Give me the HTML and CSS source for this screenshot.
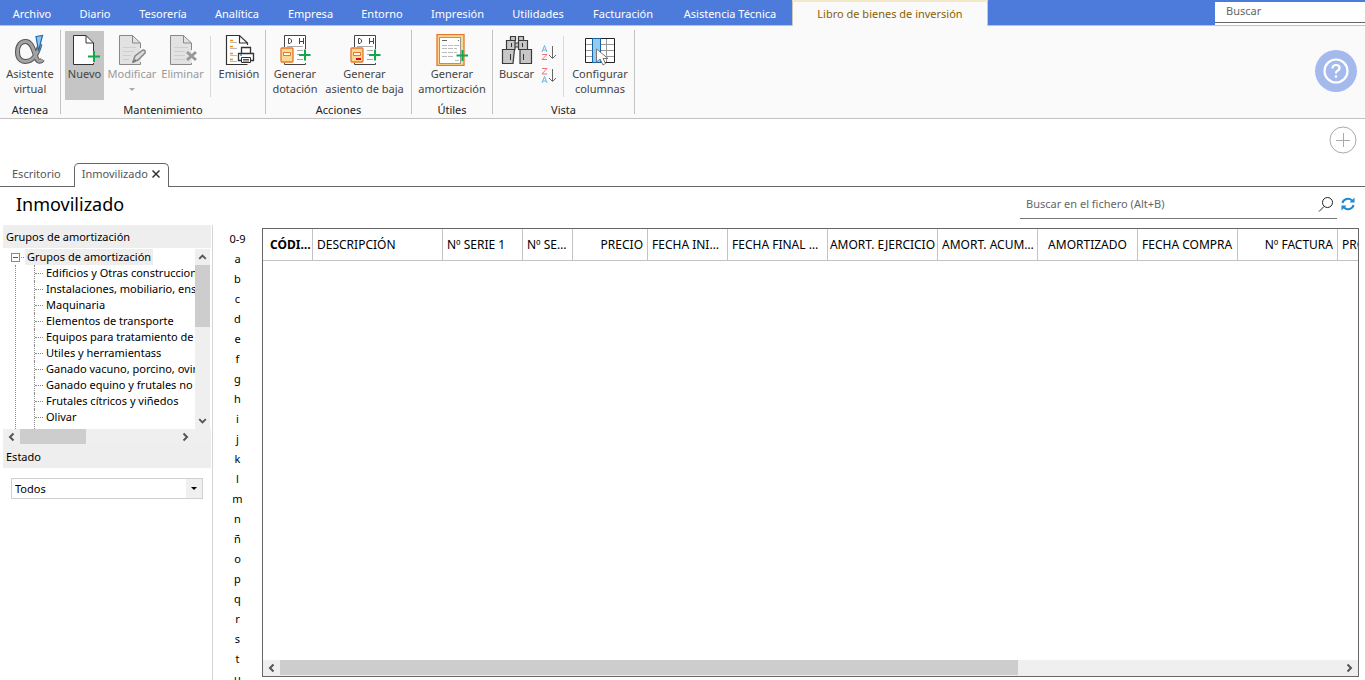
FILE: index.html
```html
<!DOCTYPE html>
<html lang="es">
<head>
<meta charset="utf-8">
<title>Inmovilizado</title>
<link rel="stylesheet" href="styles.css">
</head>
<body>
<div class="app">
  <header class="menubar">
    <nav class="menu">
      <a class="menu-item" href="#">Archivo</a>
      <a class="menu-item" href="#">Diario</a>
      <a class="menu-item" href="#">Tesorería</a>
      <a class="menu-item" href="#">Analítica</a>
      <a class="menu-item" href="#">Empresa</a>
      <a class="menu-item" href="#">Entorno</a>
      <a class="menu-item" href="#">Impresión</a>
      <a class="menu-item" href="#">Utilidades</a>
      <a class="menu-item" href="#">Facturación</a>
      <a class="menu-item" href="#">Asistencia Técnica</a>
      <a class="menu-item menu-active" href="#">Libro de bienes de inversión</a>
    </nav>
    <div class="menu-search"><input type="text" placeholder="Buscar" aria-label="Buscar"></div>
  </header>

  <section class="ribbon">
    <div class="group">
      <div class="tools">
        <button class="tool w-52" type="button">
          <svg class="icon" viewBox="0 0 32 32"><path d="M26 10C24 18 20 27.500 11.500 27.500C6.500 27.500 3.500 24 3.500 18C3.500 11.500 6.500 7.500 11.500 7.500C19 7.500 20 19 22.500 24.500C24 28 27 28 28.500 25.500" fill="none" stroke="#555" stroke-width="5"/><path d="M26 10C24 18 20 27.500 11.500 27.500C6.500 27.500 3.500 24 3.500 18C3.500 11.500 6.500 7.500 11.500 7.500C19 7.500 20 19 22.500 24.500C24 28 27 28 28.500 25.500" fill="none" stroke="#a3a3a3" stroke-width="3"/><path d="M22 2.500L28.500 1.500L24.500 17Z" fill="#8ec5f0" stroke="#1c69ae" stroke-width="1.200"/></svg>
          <span>Asistente<br>virtual</span></button>
      </div>
      <div class="group-name">Atenea</div>
    </div>

    <div class="group">
      <div class="tools">
        <button class="tool tool-selected w-39" type="button">
          <svg class="icon" viewBox="0 0 32 32"><path d="M4.500 1.500H17L24.500 9V30.500H4.500Z" fill="#fff"/><path d="M24.500 17V9L17 1.500H4.500V30.500H24.500V29M17 1.500V9H24.500" fill="none" stroke="#333"/><path d="M25 17V28M19 22.500H31" stroke="#12a84c" stroke-width="2" fill="none"/></svg>
          <span>Nuevo</span></button>
        <button class="tool w-52" type="button" disabled>
          <svg class="icon" viewBox="0 0 32 32"><path d="M3.500 1.500H16L24.500 9V30.500H3.500Z" fill="#e2e2e2"/><path d="M24.500 14V9L16.500 1.500H3.500V30.500H24.500V28M16.500 1.500V9H24.500" fill="none" stroke="#888"/><path d="M7 13.500H20M7 17.500H18M7 21.500H15M7 25.500H13" stroke="#cecece"/><path d="M17 28L19 22L27 16Q30 16 29 19L22 26Z" fill="#ddd" stroke="#888" stroke-width="1.500"/><path d="M17 28L20 26" stroke="#777" stroke-width="2"/></svg>
          <span>Modificar<i class="caret"></i></span></button>
        <button class="tool w-45" type="button" disabled>
          <svg class="icon" viewBox="0 0 32 32"><path d="M3.500 1.500H16L24.500 9V30.500H3.500Z" fill="#e2e2e2"/><path d="M24.500 16V9L16.500 1.500H3.500V30.500H24.500V29M16.500 1.500V9H24.500" fill="none" stroke="#888"/><path d="M7 13.500H21M7 17.500H18M7 21.500H18M7 25.500H18" stroke="#cecece"/><path d="M20 18L29 26M29 18L20 26" stroke="#999" stroke-width="3"/></svg>
          <span>Eliminar</span></button>
        <i class="divider"></i>
        <button class="tool w-44" type="button">
          <svg class="icon" viewBox="0 0 32 32"><path d="M3.500 1.500H16L24.500 9V30.500H3.500Z" fill="#fff"/><path d="M24.500 11V9L16.500 1.500H3.500V30.500H24.500M16.500 1.500V9H24.500" fill="none" stroke="#333" stroke-width="1.200"/><path d="M7 6.500H10M7 12.500H10M7 19.500H10M7 25.500H10" stroke="#e99517" stroke-width="1.500"/><path d="M7 8.500H14M7 14.500H14M7 21.500H14M7 27.500H14" stroke="#bbb"/><path d="M18.500 19V13.500H27.500V19M15.500 19.500H30.500V26.500H15.500Z" fill="#fff" stroke="#333" stroke-width="1.300"/><path d="M18.500 23.500H27.500V28.500H18.500Z" fill="#fff" stroke="#333"/><path d="M20 25.500H26M20 27H26" stroke="#555"/><path d="M17 21H19" stroke="#2390d9" stroke-width="1.500"/></svg>
          <span>Emisión</span></button>
      </div>
      <div class="group-name">Mantenimiento</div>
    </div>

    <div class="group">
      <div class="tools">
        <button class="tool w-50" type="button">
          <svg class="icon" viewBox="0 0 32 32"><path d="M5.500 1.500H26.500V30.500H5.500Z" fill="#fff"/><path d="M5.500 13V1.500H26.500V15M5.500 29V30.500H26.500V29" fill="none" stroke="#444"/><path d="M9.500 9.500V4.500H11L12.500 6V8L11 9.500ZM20.500 4V10M24.500 4V10M20.500 7.500H24.500" fill="none" stroke="#444"/><path d="M8 12.500H24M18 16.500H24M18 20.500H21M18 25.500H24" stroke="#aaa"/><rect x="2" y="14" width="12" height="14" rx="1" fill="#f8d98d" stroke="#e6752d" stroke-width="1.300"/><path d="M4.500 18.500H11.500V21.500H4.500Z" fill="#fff" stroke="#e6752d"/><path d="M26 15.500V26.500M20 21H31.500" stroke="#12a84c" stroke-width="2"/></svg>
          <span>Generar<br>dotación</span></button>
        <button class="tool w-85" type="button">
          <svg class="icon" viewBox="0 0 32 32"><path d="M5.500 1.500H26.500V30.500H5.500Z" fill="#fff"/><path d="M5.500 13V1.500H26.500V15M5.500 29V30.500H26.500V29" fill="none" stroke="#444"/><path d="M9.500 9.500V4.500H11L12.500 6V8L11 9.500ZM20.500 4V10M24.500 4V10M20.500 7.500H24.500" fill="none" stroke="#444"/><path d="M8 12.500H24M18 16.500H24M18 20.500H21M18 25.500H24" stroke="#aaa"/><rect x="2" y="14" width="12" height="14" rx="1" fill="#f8d98d" stroke="#e6752d" stroke-width="1.300"/><path d="M4.500 18.500H11.500V21.500H4.500Z" fill="#fff" stroke="#e6752d"/><path d="M7 25H12" stroke="#e3001b" stroke-width="2"/><path d="M26 15.500V26.500M20 21H31.500" stroke="#12a84c" stroke-width="2"/></svg>
          <span>Generar<br>asiento de baja</span></button>
      </div>
      <div class="group-name">Acciones</div>
    </div>

    <div class="group">
      <div class="tools">
        <button class="tool w-72" type="button">
          <svg class="icon" viewBox="0 0 32 32"><rect x="1" y=".500" width="27" height="31" fill="#f8d98d" stroke="#e6752d" stroke-width="1.300"/><rect x="3.500" y="3.500" width="21" height="26" fill="#fff" stroke="#999"/><path d="M6 6.500H11M22 6.500H23" stroke="#666"/><path d="M6 11.500H23M6 14.500H21M6 18.500H21M6 22.500H18M19 26.500H23" stroke="#bbb" stroke-dasharray="5 1"/><path d="M26.500 16V27M20.500 21.500H32" stroke="#12a84c" stroke-width="2"/></svg>
          <span>Generar<br>amortización</span></button>
      </div>
      <div class="group-name">Útiles</div>
    </div>

    <div class="group">
      <div class="tools">
        <button class="tool w-39" type="button">
          <svg class="icon" viewBox="0 0 32 32"><path d="M9.500 2.500H14.500V6.500H9.500ZM17.500 2.500H22.500V6.500H17.500ZM5.500 6.500H14V15.500H5.500ZM17.500 6.500H26.500V15.500H17.500ZM14 9H17.500V13H14ZM1.500 15.500H13.500L12 29.500H1.500ZM19 15.500H30.500V29.500H19Z" fill="#c7c7c7" stroke="#3b3b3b" stroke-width="1.200"/><path d="M10.500 9V13M21.500 9V13M9.500 20V26M22.500 20V26" stroke="#333"/></svg>
          <span>Buscar</span></button>
        <div class="sorts">
          <button class="sort" type="button" aria-label="Orden ascendente"><svg viewBox="0 0 16 16"><path d="M1 7L3.500 .500L6 7M2 5H5" fill="none" stroke="#66b5e6"/><path d="M1 9.500H6L1 14.500H6" fill="none" stroke="#f07373"/><path d="M11.500 1V13M8 10L11.500 13.500L15 10" fill="none" stroke="#666"/></svg></button>
          <button class="sort" type="button" aria-label="Orden descendente"><svg viewBox="0 0 16 16"><path d="M1 .500H6L1 6H6" fill="none" stroke="#f07373"/><path d="M1 15L3.500 8.500L6 15M2 13H5" fill="none" stroke="#66b5e6"/><path d="M11.500 1V13M8 10L11.500 13.500L15 10" fill="none" stroke="#666"/></svg></button>
        </div>
        <i class="divider"></i>
        <button class="tool w-60" type="button">
          <svg class="icon" viewBox="0 0 32 32"><path d="M1.500 4.500H30.500V28.500H1.500Z" fill="#fff" stroke="#222"/><path d="M2 10.500H30M2 16.500H30M2 22.500H30M22.500 5V28" stroke="#999"/><path d="M8.500 4.500H16.500V28.500H8.500Z" fill="#94caf0" stroke="#1266a8"/><path d="M12.500 15V28L16 25L19 31L21.500 29.500L19 24.500H24Z" fill="#fff" stroke="#777"/></svg>
          <span>Configurar<br>columnas</span></button>
      </div>
      <div class="group-name">Vista</div>
    </div>
    <button class="help" type="button" aria-label="Ayuda"><svg viewBox="0 0 42 42"><circle cx="21" cy="21" r="21" fill="#a5baec"/><circle cx="21" cy="21" r="11.500" fill="none" stroke="#fff" stroke-width="2.200"/><path d="M17.500 18.500Q17.500 15 21 15Q24.500 15 24.500 18Q24.500 20 22 21Q21 21.500 21 23.500" fill="none" stroke="#fff" stroke-width="2.200"/><circle cx="21" cy="26.500" r="1.300" fill="#fff"/></svg></button>
  </section>

  <div class="strip">
    <nav class="tabs">
      <a class="tab" href="#">Escritorio</a>
      <div class="tab tab-active"><a href="#">Inmovilizado</a><button class="close" type="button" aria-label="Cerrar"><svg viewBox="0 0 8 8"><path d="M.500 .500L7.500 7.500M7.500 .500L.500 7.500" stroke="#333" stroke-width="1.500"/></svg></button></div>
    </nav>
    <button class="add" type="button" aria-label="Añadir"><svg viewBox="0 0 28 28"><circle cx="14" cy="14" r="13" fill="#fff" stroke="#aaa"/><path d="M14.500 7V21M7 14.500H21" stroke="#aaa"/></svg></button>
  </div>

  <div class="title-row">
    <h1>Inmovilizado</h1>
    <div class="file-search">
      <input type="text" placeholder="Buscar en el fichero (Alt+B)" aria-label="Buscar en el fichero">
      <svg viewBox="0 0 16 16"><circle cx="9.500" cy="6.500" r="5" fill="none" stroke="#222"/><path d="M6 10.500L1 15.500" stroke="#222"/></svg>
    </div>
    <button class="refresh" type="button" aria-label="Actualizar"><svg viewBox="0 0 14 14"><path d="M1.500 6A5.500 5 0 0 1 11 3.500M12.500 8A5.500 5 0 0 1 3 10.500" fill="none" stroke="#1f8ad0" stroke-width="2"/><path d="M13.500 .500V5.500H8.500ZM.500 13.500V8.500H5.500Z" fill="#1f8ad0"/></svg></button>
  </div>

  <main class="content">
    <aside class="side">
      <h2>Grupos de amortización</h2>
      <div class="tree-box">
        <div class="tree">
          <div class="root"><button class="toggle" type="button" aria-label="Contraer"></button><span>Grupos de amortización</span></div>
          <ul>
            <li>Edificios y Otras construcciones</li>
            <li>Instalaciones, mobiliario, enseres</li>
            <li>Maquinaria</li>
            <li>Elementos de transporte</li>
            <li>Equipos para tratamiento de información</li>
            <li>Utiles y herramientass</li>
            <li>Ganado vacuno, porcino, ovino</li>
            <li>Ganado equino y frutales no cítricos</li>
            <li>Frutales cítricos y viñedos</li>
            <li>Olivar</li>
          </ul>
        </div>
        <div class="vbar"><svg viewBox="0 0 16 16"><path d="M4.500 10L8 6.500L11.500 10" /></svg><i></i><svg viewBox="0 0 16 16"><path d="M4.500 6L8 9.500L11.500 6"/></svg></div>
      </div>
      <div class="hbar hbar-tree"><svg viewBox="0 0 16 16"><path d="M10 4.500L6.500 8L10 11.500"/></svg><i></i><svg viewBox="0 0 16 16"><path d="M6 4.500L9.500 8L6 11.500"/></svg></div>
      <h2><label for="estado">Estado</label></h2>
      <div class="select-box">
        <select id="estado"><option>Todos</option></select>
        <svg viewBox="0 0 6 3"><path d="M0 0H6L3 3Z"/></svg>
      </div>
    </aside>

    <nav class="letters">
      <a href="#">0-9</a><a href="#">a</a><a href="#">b</a><a href="#">c</a><a href="#">d</a><a href="#">e</a><a href="#">f</a><a href="#">g</a><a href="#">h</a><a href="#">i</a><a href="#">j</a><a href="#">k</a><a href="#">l</a><a href="#">m</a><a href="#">n</a><a href="#">ñ</a><a href="#">o</a><a href="#">p</a><a href="#">q</a><a href="#">r</a><a href="#">s</a><a href="#">t</a><a href="#">u</a>
    </nav>

    <div class="grid">
      <div class="grid-view">
        <table>
          <colgroup><col class="w50"><col class="w130"><col class="w80"><col class="w50"><col class="w75"><col class="w80"><col class="w100"><col class="w110"><col class="w100"><col class="w100"><col class="w100"><col class="w100"><col class="w100"></colgroup>
          <thead><tr>
            <th class="key">CÓDIGO</th><th>DESCRIPCIÓN</th><th>Nº SERIE 1</th><th>Nº SERIE 2</th><th class="right">PRECIO</th><th>FECHA INICIO</th><th>FECHA FINAL AMORT.</th><th class="fit">AMORT. EJERCICIO</th><th class="tight">AMORT. ACUMULADA</th><th class="center">AMORTIZADO</th><th>FECHA COMPRA</th><th class="right">Nº FACTURA</th><th>PROVEEDOR</th>
          </tr></thead>
        </table>
      </div>
      <div class="hbar hbar-grid"><svg viewBox="0 0 16 16"><path d="M10 4.500L6.500 8L10 11.500"/></svg><i></i><b></b><svg viewBox="0 0 16 16"><path d="M6 4.500L9.500 8L6 11.500"/></svg></div>
    </div>
  </main>
</div>
</body>
</html>
```

FILE: styles.css
```css
* { box-sizing: border-box; }
html, body { height: 100%; }
body { margin: 0; background: #fff; color: #000; font: 11px/16px "Noto Sans", "Open Sans", sans-serif; overflow: hidden; }
a { color: inherit; text-decoration: none; }
button { border: 0; padding: 0; background: none; font: inherit; color: inherit; }
input, select { font: inherit; color: inherit; border: 0; outline: 0; padding: 0; background: #fff; }
input::placeholder { color: #666; opacity: 1; }
svg { display: block; flex: none; }
.app { height: 100vh; display: flex; flex-direction: column; }

.menubar { display: flex; justify-content: space-between; background: #4d7bdc; border-bottom: 1px solid #c3c3c3; flex: none; height: 26px; }
.menu { display: grid; grid-template-columns: 64px 62px 74px 74px 73px 70px 81px 80px 90px 124px 196px; }
.menu-item { line-height: 27px; color: #fff; white-space: nowrap; text-align: center; }
.menu-active { height: 26px; background: #fafafa; color: #8a6100; border: 1px solid #c9c9bd; border-top: 2px solid #f3e9c8; border-bottom: 0; line-height: 24px; }
.menu-search { width: 150px; margin-top: 2px; background: #fff; height: 23px; }
.menu-search input { display: block; width: 100%; height: 21px; padding: 0 11px 3px; border-bottom: 1px solid #666; }

.ribbon { display: flex; height: 93px; background: #fafafa; border-bottom: 1px solid #c3c3c3; flex: none; }
.group { display: flex; flex-direction: column; padding: 1px 4px 0; border-right: 1px solid #c3c3c3; margin: 4px 0; }
.tools { display: flex; flex: 1; gap: 2px; }
.tool { display: flex; flex-direction: column; align-items: center; padding: 3px 0 0; height: 69px; color: #444; line-height: 15px; white-space: nowrap; }
.tool span { text-align: center; }
.tool:disabled { color: #999; }
.tool-selected { background: #c5c5c5; }
.w-39 { width: 39px; } .w-44 { width: 44px; } .w-45 { width: 45px; } .w-50 { width: 50px; } .w-52 { width: 52px; } .w-60 { width: 60px; } .w-72 { width: 72px; } .w-85 { width: 85px; }
.icon { width: 32px; height: 32px; }
.caret { display: block; width: 0; margin: 7px auto 0; border: 3px solid transparent; border-top-color: #aaa; border-bottom: 0; }
.divider { width: 1px; margin: 5px 4px 5px 3px; background: #d9d9d9; }
.sorts { display: flex; flex-direction: column; gap: 7px; padding: 14px 1px 0 3px; }
.sort svg { width: 16px; height: 16px; }
.group-name { text-align: center; line-height: 16px; height: 12px; color: #222; }
.help { margin: 24px 8px 0 auto; width: 42px; height: 42px; }

.strip { display: flex; justify-content: space-between; border-bottom: 1px solid #666; height: 68px; flex: none; }
.tabs { display: flex; align-items: flex-end; padding-left: 4px; }
.tab { padding: 0 8px; height: 24px; line-height: 23px; color: #555; }
.tab-active { display: flex; align-items: center; gap: 4px; margin-left: 5px; padding: 0 8px 4px 7px; border: 1px solid #666; border-bottom: 0; border-radius: 5px 5px 0 0; background: #fff; margin-bottom: -1px; }
.close svg { width: 8px; height: 8px; }
.add { width: 28px; height: 28px; margin: 7px 8px 0 0; }

.title-row { display: flex; align-items: center; height: 38px; padding: 0 10px 4px 16px; flex: none; }
h1 { margin: 0 auto 0 0; font-size: 18px; line-height: 24px; font-weight: 400; }
.file-search { display: flex; align-items: center; width: 317px; height: 29px; border-bottom: 1px solid #777; padding: 0 3px 0 6px; margin-right: 4px; }
.file-search input { flex: 1; min-width: 0; }
.file-search svg { width: 16px; height: 16px; }
.refresh svg { width: 14px; height: 14px; }

.content { display: flex; flex: 1; min-height: 0; padding: 0 6px 0 3px; }
.side { width: 210px; flex: none; border-right: 1px solid #d5d5d5; padding-right: 1px; }
h2 { margin: 0; padding: 0 3px; background: #eee; font-size: 11px; font-weight: 400; line-height: 23px; }
.tree-box { display: flex; height: 181px; padding-right: 1px; border-top: 1px solid #fff; }
.tree { flex: 1; min-width: 0; overflow: hidden; padding-left: 8px; }
.root { display: flex; align-items: center; height: 16px; }
.root::before { content: ""; order: 1; width: 3px; margin: 0 1px; border-top: 1px dotted #888; }
.root span { order: 2; background: #eee; padding: 0 2px; }
.toggle { width: 9px; height: 9px; border: 1px solid #888; }
.toggle::before { content: ""; display: block; width: 5px; height: 1px; margin: 0 auto; background: #3a5fa8; }
.tree ul { list-style: none; margin: 0 0 0 4px; padding: 0 0 12px 18px; border-left: 1px dotted #888; }
.tree li { display: flex; align-items: center; height: 16px; white-space: nowrap; border-left: 1px dotted #888; }
.tree li:last-child { height: 28px; margin-bottom: -12px; padding-bottom: 12px; }
.tree li::before { content: ""; width: 8px; border-top: 1px dotted #888; margin-right: 3px; flex: none; }
.vbar { display: flex; flex-direction: column; width: 15px; background: #efefef; }
.vbar i { height: 62px; margin-bottom: auto; background: #cdcdcd; }
.vbar svg, .hbar svg { width: 17px; height: 16px; fill: none; stroke: #555; stroke-width: 2; }
.vbar svg { width: 15px; }
.hbar { display: flex; height: 16px; background: #efefef; }
.hbar i { background: #cdcdcd; height: 15px; }
.hbar-tree { padding-right: 17px; }
.hbar-tree i { width: 66px; margin-right: auto; }
.hbar-grid i { flex: 16; }
.hbar-grid b { flex: 7; }
.select-box { position: relative; margin: 10px 8px; height: 21px; border: 1px solid #d0d0d0; }
.select-box select { display: block; width: 100%; height: 100%; padding-left: 3px; appearance: none; background: linear-gradient(#f0f0f0, #f0f0f0) right / 16px 100% no-repeat; }
.select-box svg { position: absolute; right: 5px; top: 8px; width: 6px; height: 3px; pointer-events: none; }

.letters { width: 49px; flex: none; overflow: hidden; padding-top: 4px; }
.letters a { display: block; text-align: center; line-height: 20px; }

.grid { flex: 1; min-width: 0; display: flex; flex-direction: column; margin: 3px 0; border: 1px solid #666; }
.grid-view { flex: 1; overflow: hidden; }
table { table-layout: fixed; width: 1175px; border-collapse: separate; border-spacing: 0; }
th { height: 32px; padding: 0 4px; border: solid #c3c3c3; border-width: 0 1px 1px 0; font-size: 12px; line-height: 18px; font-weight: 400; text-align: left; white-space: nowrap; overflow: hidden; text-overflow: ellipsis; }
th.key { font-weight: 700; padding: 0 0 0 7px; }
th.tight { padding-right: 0; }
th.right { text-align: right; }
th.center { text-align: center; }
th.fit { padding: 0; text-align: center; }
.w50 { width: 50px; } .w75 { width: 75px; } .w80 { width: 80px; } .w100 { width: 100px; } .w110 { width: 110px; } .w130 { width: 130px; }
```
